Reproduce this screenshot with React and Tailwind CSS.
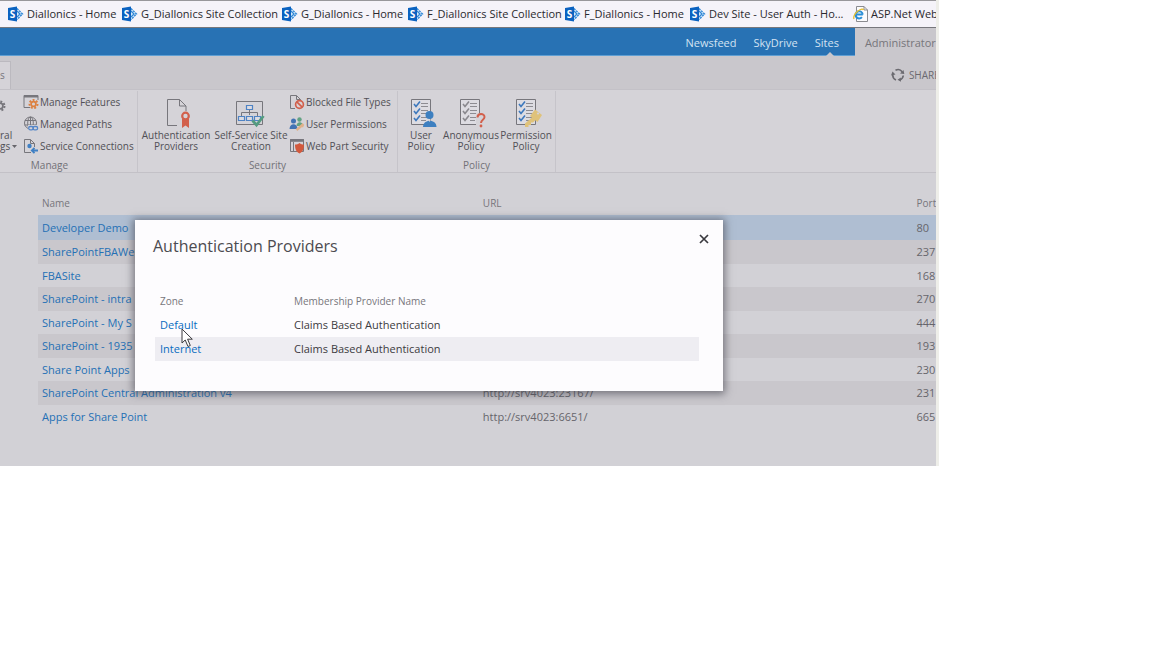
const bookmarks = [
  { label: "Diallonics - Home", width: "w-[114px]" },
  { label: "G_Diallonics Site Collection", width: "w-[160px]" },
  { label: "G_Diallonics - Home", width: "w-[126px]" },
  { label: "F_Diallonics Site Collection", width: "w-[157px]" },
  { label: "F_Diallonics - Home", width: "w-[125px]" },
  { label: "Dev Site - User Auth - Ho...", width: "w-[163px]" },
];

const sites = [
  { name: "Developer Demo", url: "", port: "80" },
  { name: "SharePointFBAWe", url: "", port: "237" },
  { name: "FBASite", url: "", port: "168" },
  { name: "SharePoint - intra", url: "", port: "270" },
  { name: "SharePoint - My S", url: "", port: "444" },
  { name: "SharePoint - 1935", url: "", port: "193" },
  { name: "Share Point Apps", url: "", port: "230" },
  { name: "SharePoint Central Administration v4", url: "http://srv4023:23167/", port: "231" },
  { name: "Apps for Share Point", url: "http://srv4023:6651/", port: "665" },
];

function SharePointIcon() {
  return (
    <svg width="16" height="16" viewBox="0 0 16 16" className="shrink-0" aria-hidden="true">
      <path d="M9 2l6 6-6 6z" fill="#d6e8f8" />
      <path d="M9 2.500l5.500 5.500L9 13.500" fill="none" stroke="#2f86d6" strokeWidth="1.400" strokeDasharray="2 1" />
      <path d="M9 5l3 3-3 3" fill="none" stroke="#2f86d6" strokeWidth="1.200" />
      <path d="M0 2L9 .5v15L0 14z" fill="#0b62c0" />
      <text x="1.800" y="11.500" fontSize="10" fontWeight="700" fill="#fff" fontFamily="Open Sans, sans-serif">S</text>
    </svg>
  );
}

function ExplorerIcon() {
  return (
    <svg width="16" height="16" viewBox="0 0 16 16" className="shrink-0" aria-hidden="true">
      <path d="M3.500 .5h7.500l3.500 3.500v11.500h-11z" fill="#fbfbfd" stroke="#8b8b90" />
      <path d="M11 .5V4h3.500" fill="none" stroke="#8b8b90" />
      <path d="M9.800 8.600H2.600M9.700 8.500a3.600 3.600 0 1 0-.8 2.600" fill="none" stroke="#2b8fd8" strokeWidth="2" />
      <path d="M1 13c-1-2 1-6 4-8s5-2.500 5.500-1" fill="none" stroke="#e8bf2f" strokeWidth="1.300" />
    </svg>
  );
}

function Gear({ cx, cy, r, color, hole }) {
  return (
    <g>
      <circle cx={cx} cy={cy} r={r} fill="none" stroke={color} strokeWidth="2" strokeDasharray="1.900 1.600" />
      <circle cx={cx} cy={cy} r={r - 1.6} fill={hole} stroke={color} strokeWidth="1.700" />
    </g>
  );
}

const smallIcons = {
  features: (
    <>
      <path d="M1 13.500V1.500h14V6M1 13.500h6" fill="none" stroke="#77767c" />
      <path d="M1 2.500h14" stroke="#77767c" strokeWidth="2" />
      <Gear cx={10.5} cy={10} r={4} color="#dc8142" hole="#d5d3d8" />
    </>
  ),
  paths: (
    <>
      <g fill="none" stroke="#77767c">
        <circle cx="7.500" cy="7" r="6" />
        <ellipse cx="7.500" cy="7" rx="2.800" ry="6" />
        <path d="M2 4.500h11M1.500 9h12M7.500 1v12" />
      </g>
      <path d="M5 9h10v6H5z" fill="#d5d3d8" />
      <rect x="5.700" y="10.500" width="4.600" height="3.300" rx="1.600" fill="none" stroke="#5586c8" strokeWidth="1.300" />
      <rect x="10" y="10.500" width="4.600" height="3.300" rx="1.600" fill="none" stroke="#5586c8" strokeWidth="1.300" />
    </>
  ),
  service: (
    <>
      <path d="M8 14.500H1.500V1.500h6l4 4V9M7.500 1.500v4h4" fill="none" stroke="#77767c" />
      <circle cx="6.500" cy="8" r="2.200" fill="#4080c4" />
      <path d="M15 12.500H9M11.500 9.800L8.800 12.500l2.700 2.700" fill="none" stroke="#4080c4" strokeWidth="1.800" />
    </>
  ),
  blocked: (
    <>
      <path d="M6 14.500H1.500V1.500h6l4 4V7M7.500 1.500v4h4" fill="none" stroke="#77767c" />
      <circle cx="10.500" cy="10.500" r="3.900" fill="#dcd3d6" stroke="#d2604c" strokeWidth="1.700" />
      <path d="M7.800 7.900l5.400 5.300" stroke="#d2604c" strokeWidth="1.700" />
    </>
  ),
  users: (
    <>
      <circle cx="10.500" cy="3.500" r="2.200" fill="#62a283" />
      <path d="M7.500 10c0-5 6.500-5 6.500 0z" fill="#62a283" />
      <circle cx="4.500" cy="5" r="2.500" fill="#4273b4" />
      <path d="M.5 13c0-6.500 8-6.500 8 0z" fill="#4273b4" />
      <path d="M14.500 8l-4 3.500-3 2.500M12 9.500l2.500 1" stroke="#e0b18a" strokeWidth="2.400" fill="none" />
    </>
  ),
  webpart: (
    <>
      <path d="M1.500 1.500h13v12h-13zM4.500 4v9.500" fill="none" stroke="#77767c" />
      <path d="M1 2.500h14" stroke="#77767c" strokeWidth="2.600" />
      <path d="M10.500 5c1.300 1 2.800 1.500 4.500 1.500 0 4.500-1 7-4.500 9-3.500-2-4.500-4.500-4.500-9 1.700 0 3.200-.5 4.500-1.500z" fill="#d2593d" />
    </>
  ),
};

function Checklist({ tick }) {
  return (
    <g fill="none">
      <path d="M1.500 1.500h19v25h-19z" fill="#dddce2" stroke="#77767c" />
      <path d="M11 5.500h7M11 8.500h7M11 12.500h7M11 15.500h7M11 19.500h6M11 22.500h5" stroke="#8d8c92" />
      <path d="M4 6l2 2.500 4-5M4 13l2 2.500 4-5M4 20l2 2.500 4-5" stroke={tick} strokeWidth="1.600" />
    </g>
  );
}

const largeIcons = {
  providers: {
    viewBox: "-2 0 30 30",
    art: (
      <>
        <path d="M14 27.500H4.500v-26h12l6.500 6.500v5M16.500 1.500V8H23" fill="none" stroke="#77767c" />
        <path d="M19 20.500h7V30l-3.500-2.500L19 30z" fill="#d2604c" />
        <circle cx="22.500" cy="18" r="3.300" fill="#d5d3d8" stroke="#d2604c" strokeWidth="2.200" />
      </>
    ),
  },
  selfService: {
    viewBox: "1 0 30 30",
    art: (
      <>
        <path d="M1.500 3.500h26v23h-26z" fill="none" stroke="#77767c" />
        <path d="M14.500 11v6M6.500 18v-3.500h16V18" fill="none" stroke="#77767c" />
        <path
          d="M11.500 7.500h6v4h-6zM3.500 18.500h6v4h-6zM11.500 18.500h6v4h-6zM19.500 18.500h6v4h-6z"
          fill="#dcdbe1"
          stroke="#4f83c4"
          strokeWidth="1.200"
        />
        <path d="M17.500 22.500l4 4.500 7-9" fill="none" stroke="#549b80" strokeWidth="2.800" />
      </>
    ),
  },
  user: {
    viewBox: "-4 0 30 30",
    art: (
      <>
        <Checklist tick="#3d78bd" />
        <circle cx="19.500" cy="17" r="4" fill="#3d7fc0" />
        <path d="M13 29c0-8.500 13.500-8.500 13.500 0z" fill="#3d7fc0" />
        <path d="M18 21.500l1.500 2.500 1.500-2.500z" fill="#d5d3d8" />
      </>
    ),
  },
  anonymous: {
    viewBox: "-3 0 30 30",
    art: (
      <>
        <Checklist tick="#8a898f" />
        <path d="M17 15h9v14h-9z" fill="#d5d3d8" />
        <path d="M18.500 19.500c0-4.500 7-4.500 7-.5 0 3-3.500 2.500-3.500 6" fill="none" stroke="#d2604c" strokeWidth="2" />
        <circle cx="22" cy="28" r="1.400" fill="#d2604c" />
      </>
    ),
  },
  permission: {
    viewBox: "-4 0 30 30",
    art: (
      <>
        <Checklist tick="#3d78bd" />
        <path d="M18 18.500L10 25.500V29h3.500v-2h2.500v-2.500h2l4-3.500z" fill="#dfc27a" />
        <path d="M20 11.500l7 5.500-4.500 7-7.500-6z" fill="#dfc27a" />
        <circle cx="23" cy="15.500" r="1.100" fill="#d5d3d8" />
      </>
    ),
  },
};

function SmallCommand({ icon, label }) {
  return (
    <button type="button" className="flex h-[22px] items-center gap-px whitespace-nowrap text-[10px]">
      <svg width="16" height="16" viewBox="0 0 16 16" className="shrink-0" aria-hidden="true">{smallIcons[icon]}</svg>
      {label}
    </button>
  );
}

function LargeCommand({ icon, lines, width }) {
  return (
    <button type="button" className={`flex shrink-0 flex-col items-center whitespace-nowrap text-[10px] leading-[11px] ${width}`}>
      <svg width="30" height="30" viewBox={largeIcons[icon].viewBox} className="mt-[7px] mb-[2px] overflow-visible" aria-hidden="true">
        {largeIcons[icon].art}
      </svg>
      <span>{lines[0]}</span>
      <span>{lines[1]}</span>
    </button>
  );
}

function Group({ label, className, children }) {
  return (
    <section className={`flex shrink-0 flex-col justify-between overflow-hidden border-r border-[#c6c4ca] ${className}`}>
      <div className="flex">{children}</div>
      <h2 className="text-center text-[10px] leading-[14px] text-[#727177]">{label}</h2>
    </section>
  );
}

function Dialog() {
  return (
    <div
      role="dialog"
      aria-labelledby="dialog-title"
      className="absolute top-[220px] left-[135px] w-[588px] bg-[#fdfcfe] pt-[14px] pr-[24px] pb-[30px] pl-[20px] shadow-[0_1px_8px_2px_rgba(60,60,70,0.6)]"
    >
      <div className="flex items-start justify-between">
        <h1 id="dialog-title" className="-ml-[2px] text-[16px] leading-[24px] text-[#4c4b50]">Authentication Providers</h1>
        <button type="button" aria-label="Close" className="-mr-[10px]">
          <svg width="10" height="10" viewBox="0 0 10 10" aria-hidden="true">
            <path d="M1 1l8 8M9 1L1 9" stroke="#3a393e" strokeWidth="1.700" />
          </svg>
        </button>
      </div>
      <table className="mt-[32px] w-full table-fixed text-left text-[11px] text-[#3c3b40]">
        <colgroup>
          <col className="w-[134px]" />
          <col />
        </colgroup>
        <thead>
          <tr className="h-[23px] text-[10px] text-[#77767c]">
            <th className="px-[5px] font-normal">Zone</th>
            <th className="px-[5px] font-normal">Membership Provider Name</th>
          </tr>
        </thead>
        <tbody>
          <tr className="h-6">
            <td className="px-[5px]"><a href="#default" className="text-[#0a6cc0]">Default</a></td>
            <td className="px-[5px]">Claims Based Authentication</td>
          </tr>
          <tr className="h-6 bg-[#eeedf2]">
            <td className="px-[5px]"><a href="#internet" className="text-[#0a6cc0]">Internet</a></td>
            <td className="px-[5px]">Claims Based Authentication</td>
          </tr>
        </tbody>
      </table>
      <svg width="13" height="20" viewBox="0 0 13 20" className="absolute top-[108px] left-[46px]" aria-hidden="true">
        <path d="M1 1v14l3.200-3 2.800 6.500 2.300-1L6.600 11.200h4.700z" fill="#fff" stroke="#3a393e" strokeWidth="1" />
      </svg>
    </div>
  );
}

export default function App() {
  return (
    <div className="min-h-screen bg-white font-['Open_Sans','Noto_Sans',sans-serif]">
      <div className="relative w-[81.5%] overflow-hidden border-r-[3px] border-[#eeeee9] bg-[#d2d1d6]">
        <nav className="flex h-7 items-center overflow-hidden border-t border-b border-t-[#98979b] border-b-[#77777c] bg-[#f5f3f9] pl-2 text-[11px] text-[#2a292e]">
          {bookmarks.map((b) => (
            <a key={b.label} href="#bookmark" className={`flex shrink-0 items-center gap-[3px] whitespace-nowrap ${b.width}`}>
              <SharePointIcon />
              {b.label}
            </a>
          ))}
          <a href="#bookmark" className="flex shrink-0 items-center gap-[2px] whitespace-nowrap">
            <ExplorerIcon />
            ASP.Net Web
          </a>
        </nav>

        <header className="flex h-7 justify-end bg-[#c9c7cc] text-[11px]">
          <nav className="flex flex-1 items-center justify-end gap-[17px] border-b border-[#5f9fd3] bg-[#2872b4] pt-[3px] pr-4 text-[#d3e2f2]">
            <a href="#newsfeed">Newsfeed</a>
            <a href="#skydrive">SkyDrive</a>
            <a href="#sites" className="relative">
              Sites
              <svg width="8" height="4" viewBox="0 0 8 4" className="absolute top-[17px] left-[11px]" aria-hidden="true">
                <path d="M0 4l4-4 4 4z" fill="#c9c7cc" />
              </svg>
            </a>
          </nav>
          <button type="button" className="w-[81px] overflow-hidden pt-[2px] pl-[10px] text-left whitespace-nowrap text-[#77767b]">Administrator</button>
        </header>

        <div className="flex h-[33px] items-end justify-between bg-[#c9c7cc]">
          <button type="button" className="h-7 w-[11px] border-t border-r border-[#bbb9bf] bg-[#d5d3d8] text-left text-[10px] text-[#77767c]">s</button>
          <button type="button" className="flex h-7 w-[45px] items-center gap-[4px] overflow-hidden text-[10px] text-[#6b6a70]">
            <svg width="14" height="14" viewBox="0 0 14 14" className="shrink-0" aria-hidden="true">
              <g fill="none" stroke="#6b6a70" strokeWidth="1.600">
                <path d="M4.500 2.300a5.200 5.200 0 0 1 6.700 1.500M12.300 7.500a5.200 5.200 0 0 1-3.800 4.500M5 11.900A5.200 5.200 0 0 1 1.800 6.500" />
              </g>
              <path d="M9 5.500l4.300.5-.8-4zM9.800 9.500l-3.300 2.300 3.500 2zM0 7.500l1.500-4L4.500 6.500z" fill="#6b6a70" />
            </svg>
            SHARE
          </button>
        </div>

        <div className="flex h-[84px] border-t border-b border-[#c3c1c7] bg-[#d5d3d8] pt-px text-[#515056]">
          <Group label="Manage" className="w-[138px] pr-[38px]">
            <button type="button" className="flex w-[23px] shrink-0 flex-col items-start text-[10px] leading-[11px]">
              <svg width="6" height="30" viewBox="0 0 6 30" className="mt-[7px] mb-[2px]" aria-hidden="true">
                <Gear cx={0} cy={8} r={4.5} color="#77767c" hole="#d5d3d8" />
              </svg>
              <span>ral</span>
              <span className="flex items-center gap-[2px]">
                gs
                <svg width="5" height="3" viewBox="0 0 5 3" aria-hidden="true"><path d="M0 0h5L2.500 3z" fill="#66656b" /></svg>
              </span>
            </button>
            <div className="flex flex-col items-start">
              <SmallCommand icon="features" label="Manage Features" />
              <SmallCommand icon="paths" label="Managed Paths" />
              <SmallCommand icon="service" label="Service Connections" />
            </div>
          </Group>
          <Group label="Security" className="w-[260px]">
            <LargeCommand icon="providers" lines={["Authentication", "Providers"]} width="w-[76px]" />
            <LargeCommand icon="selfService" lines={["Self-Service Site", "Creation"]} width="w-[74px]" />
            <div className="flex flex-col items-start pl-px">
              <SmallCommand icon="blocked" label="Blocked File Types" />
              <SmallCommand icon="users" label="User Permissions" />
              <SmallCommand icon="webpart" label="Web Part Security" />
            </div>
          </Group>
          <Group label="Policy" className="w-[158px]">
            <LargeCommand icon="user" lines={["User", "Policy"]} width="w-[46px]" />
            <LargeCommand icon="anonymous" lines={["Anonymous", "Policy"]} width="w-[54px]" />
            <LargeCommand icon="permission" lines={["Permission", "Policy"]} width="w-[56px]" />
          </Group>
        </div>

        <main className="pt-[18px] pb-[38px] pl-[38px]">
          <table className="w-full table-fixed text-left text-[11px] whitespace-nowrap text-[#66656b]">
            <colgroup>
              <col className="w-[49.1%]" />
              <col className="w-[48.3%]" />
              <col />
            </colgroup>
            <thead>
              <tr className="h-6 text-[10px] text-[#77767c]">
                <th className="overflow-hidden pl-1 font-normal">Name</th>
                <th className="overflow-hidden pl-1 font-normal">URL</th>
                <th className="overflow-hidden pl-1 font-normal">Port</th>
              </tr>
            </thead>
            <tbody>
              {sites.map((s) => (
                <tr key={s.name} className="h-[23px] first:h-[25px] first:bg-[#afbed2] even:h-6 even:bg-[#c9c7cc]">
                  <td className="overflow-hidden pt-px pl-1"><a href="#site" className="text-[#2470b5]">{s.name}</a></td>
                  <td className="overflow-hidden pt-px pl-1">{s.url}</td>
                  <td className="overflow-hidden pt-px pl-1">{s.port}</td>
                </tr>
              ))}
            </tbody>
          </table>
        </main>

        <Dialog />
      </div>
    </div>
  );
}
